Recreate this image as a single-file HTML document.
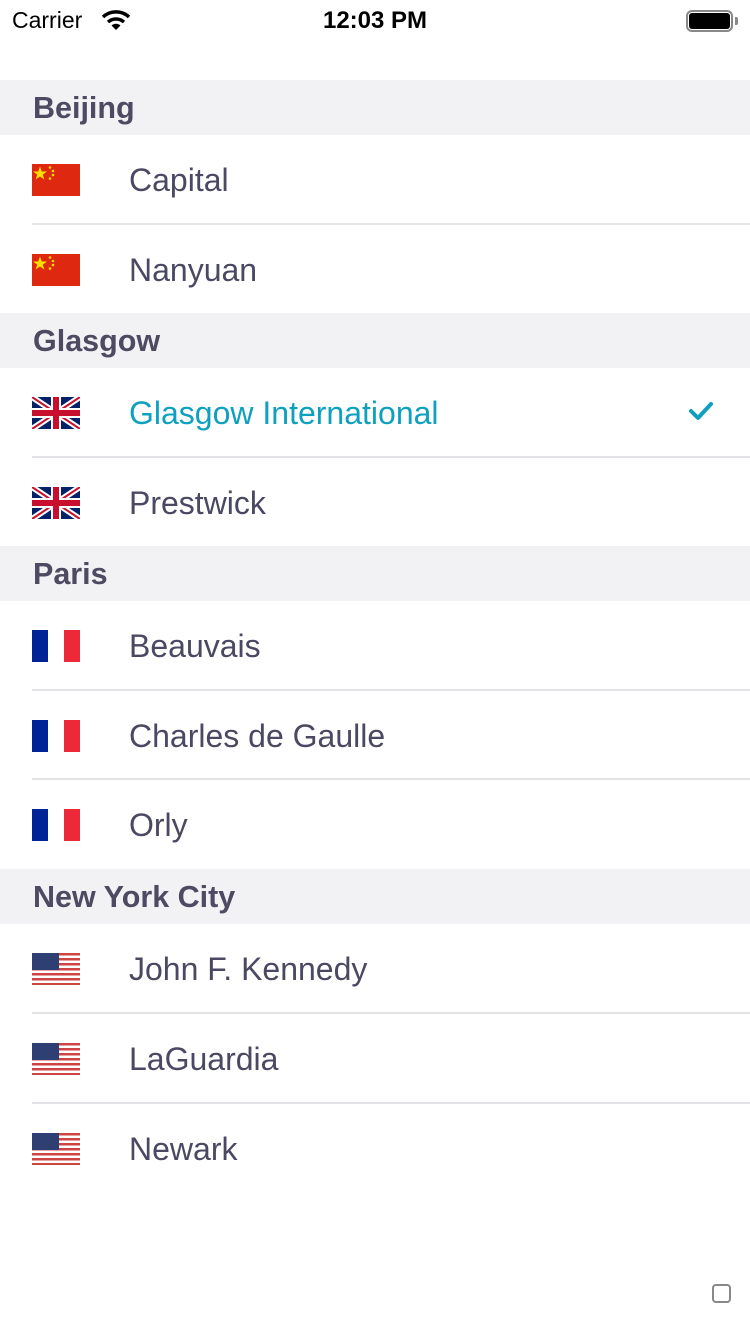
<!DOCTYPE html>
<html><head><meta charset="utf-8"><style>
*{margin:0;padding:0;box-sizing:border-box}
body{width:750px;height:1334px;background:#fff;position:relative;overflow:hidden;font-family:"Liberation Sans",sans-serif}
.a{position:absolute}
.h{position:absolute;left:0;width:750px;height:55px;background:#f2f2f5}
.h span{position:absolute;left:33px;top:11px;font-size:30.5px;font-weight:bold;color:#4d4a62}
.r{position:absolute;left:0;width:750px;height:90px}
.r span{position:absolute;left:129px;top:27px;font-size:32px;color:#4a4862}
.r svg{position:absolute;left:32px;top:29px}
.sep{position:absolute;left:32px;right:0;height:2px;background:#e4e4e8}
</style></head><body>
<div class="a" style="left:12px;top:7px;font-size:23px;color:#000">Carrier</div>
<svg class="a" style="left:101px;top:9px" width="30" height="22" viewBox="0 0 30 22"><path d="M2 8 A19 19 0 0 1 28 8" stroke="#000" stroke-width="3.5" fill="none"/><path d="M7 13 A12 12 0 0 1 23 13" stroke="#000" stroke-width="3.5" fill="none"/><path d="M15 21 L10.5 16.5 A6.5 6.5 0 0 1 19.5 16.5 Z" fill="#000"/></svg>
<div class="a" style="left:0;width:750px;text-align:center;top:7px;font-size:24px;font-weight:bold;color:#000">12:03 PM</div>
<div class="a" style="left:686px;top:10px;width:47px;height:22px;border:2px solid #888;border-radius:6px"></div>
<div class="a" style="left:689px;top:13px;width:41px;height:16px;background:#000;border-radius:3px"></div>
<div class="a" style="left:735px;top:17px;width:3px;height:8px;background:#888;border-radius:0 2px 2px 0"></div>

<div class="h" style="top:80px"><span>Beijing</span></div>
<div class="r" style="top:135px"><svg width="48" height="32"><use href="#cn"/></svg><span>Capital</span></div>
<div class="sep" style="top:223px"></div>
<div class="r" style="top:225px"><svg width="48" height="32"><use href="#cn"/></svg><span>Nanyuan</span></div>
<div class="h" style="top:313px"><span>Glasgow</span></div>
<div class="r" style="top:368px"><svg width="48" height="32"><use href="#gb"/></svg><span style="color:#0ea0bf">Glasgow International</span>
<svg width="26" height="20" style="left:688px;top:33px" viewBox="0 0 26 20"><path d="M3 10 L10 17 L23 3" stroke="#0ea0bf" stroke-width="4" fill="none" stroke-linecap="round" stroke-linejoin="round"/></svg></div>
<div class="sep" style="top:456px"></div>
<div class="r" style="top:458px"><svg width="48" height="32"><use href="#gb"/></svg><span>Prestwick</span></div>
<div class="h" style="top:546px"><span>Paris</span></div>
<div class="r" style="top:601px"><svg width="48" height="32"><use href="#fr"/></svg><span>Beauvais</span></div>
<div class="sep" style="top:689px"></div>
<div class="r" style="top:691px"><svg width="48" height="32"><use href="#fr"/></svg><span>Charles de Gaulle</span></div>
<div class="sep" style="top:778px"></div>
<div class="r" style="top:780px"><svg width="48" height="32"><use href="#fr"/></svg><span>Orly</span></div>
<div class="h" style="top:869px"><span>New York City</span></div>
<div class="r" style="top:924px"><svg width="48" height="32"><use href="#us"/></svg><span>John F. Kennedy</span></div>
<div class="sep" style="top:1012px"></div>
<div class="r" style="top:1014px"><svg width="48" height="32"><use href="#us"/></svg><span>LaGuardia</span></div>
<div class="sep" style="top:1102px"></div>
<div class="r" style="top:1104px"><svg width="48" height="32"><use href="#us"/></svg><span>Newark</span></div>

<div class="a" style="left:712px;top:1284px;width:19px;height:19px;border:2px solid #888;border-radius:4px"></div>

<svg width="0" height="0" style="position:absolute">
<defs>
<g id="cn"><rect width="48" height="32" fill="#de2910"/><polygon points="8,2.5 9.8,7.5 15,7.5 10.8,10.6 12.3,15.5 8,12.5 3.7,15.5 5.2,10.6 1,7.5 6.2,7.5" fill="#ffde00"/><circle cx="18" cy="3.5" r="1.3" fill="#ffde00"/><circle cx="21" cy="7" r="1.3" fill="#ffde00"/><circle cx="21" cy="11" r="1.3" fill="#ffde00"/><circle cx="18" cy="14.5" r="1.3" fill="#ffde00"/></g>
<g id="gb"><rect width="48" height="32" fill="#012169"/><path d="M0 0L48 32M48 0L0 32" stroke="#fff" stroke-width="6"/><path d="M0 0L48 32M48 0L0 32" stroke="#c8102e" stroke-width="2"/><path d="M24 0V32M0 16H48" stroke="#fff" stroke-width="10"/><path d="M24 0V32M0 16H48" stroke="#c8102e" stroke-width="6"/></g>
<g id="fr"><rect width="16" height="32" fill="#002395"/><rect x="16" width="16" height="32" fill="#fff"/><rect x="32" width="16" height="32" fill="#ed2939"/></g>
<g id="us"><rect width="48" height="32" fill="#fff"/>
<rect y="0" width="48" height="2.5" fill="#c44"/><rect y="5" width="48" height="2.5" fill="#c44"/><rect y="10" width="48" height="2.5" fill="#c44"/><rect y="15" width="48" height="2.5" fill="#c44"/><rect y="20" width="48" height="2.5" fill="#c44"/><rect y="25" width="48" height="2.5" fill="#c44"/><rect y="30" width="48" height="2" fill="#c44"/>
<rect width="27" height="17" fill="#2e3f73"/></g>
</defs></svg>
</body></html>
